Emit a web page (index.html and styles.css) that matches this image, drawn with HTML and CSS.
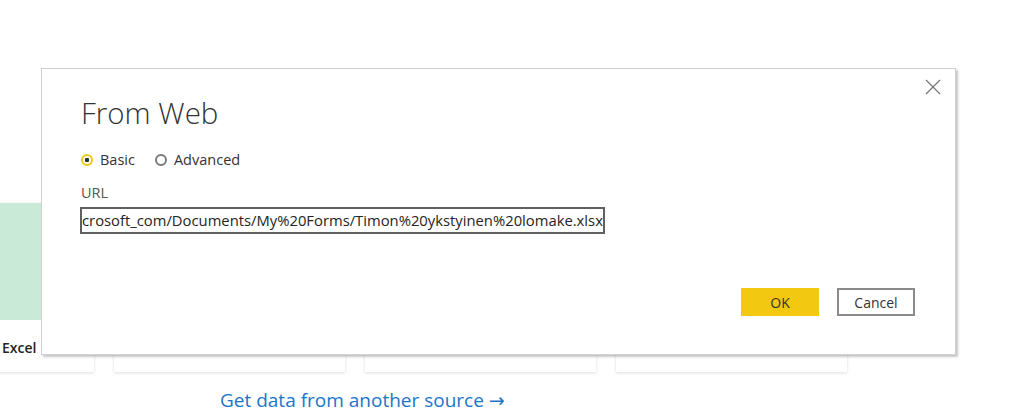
FILE: index.html
```html
<!DOCTYPE html>
<html>
<head>
<meta charset="utf-8">
<link rel="stylesheet" href="styles.css">
</head>
<body>
<div class="page">
  <div class="cards">
    <div class="card">
      <div class="card-img green"></div>
      <div class="card-label">Excel</div>
    </div>
    <div class="card"></div>
    <div class="card"></div>
    <div class="card"></div>
  </div>
  <a class="more" href="#">Get data from another source <span class="arrow">→</span></a>

  <div class="dialog">
    <button class="close" aria-label="Close">
      <svg width="16" height="16" viewBox="0 0 16 16"><path d="M1 1L15 15M15 1L1 15" stroke="#767676" stroke-width="1.2" fill="none"/></svg>
    </button>
    <h1 class="title">From Web</h1>
    <div class="radios">
      <label class="radio"><span class="dot on"></span>Basic</label>
      <label class="radio"><span class="dot off"></span>Advanced</label>
    </div>
    <div class="field-label">URL</div>
    <div class="url">crosoft_com/Documents/My%20Forms/Timon%20ykstyinen%20lomake.xlsx</div>
    <div class="actions">
      <button class="btn ok">OK</button>
      <button class="btn cancel">Cancel</button>
    </div>
  </div>
</div>
</body>
</html>
```
FILE: styles.css
```css
* { box-sizing: border-box; }
html, body { margin: 0; padding: 0; background: #fff; }
body { font-family: "Open Sans", "Noto Sans", sans-serif; color: #333; }
.page { position: relative; width: 1022px; height: 409px; overflow: hidden; }

.cards { display: flex; gap: 20px; margin-left: -137px; padding-top: 203px; }
.card { width: 231px; height: 169px; background: #fff; box-shadow: 0 1px 3px rgba(0,0,0,0.14); flex: none; }
.card-img { height: 117px; }
.green { background: #c9ead7; }
.card-label { margin-top: 18px; padding-left: 139px; font-size: 14px; font-weight: 600; color: #252423; }

.more { display: inline-block; margin: 20px 0 0 220px; font-size: 19px; line-height: 17px; color: #1b75c9; text-decoration: none; }
.arrow { font-family: "DejaVu Sans", sans-serif; font-size: 19px; }

.dialog { position: absolute; left: 41px; top: 68px; width: 915px; height: 287px; background: #fff; border: 1px solid #d0d0d0; box-shadow: 2px 2px 2px rgba(0,0,0,0.22); padding: 24px 40px 0 39px; }
.close { position: absolute; right: 14px; top: 10px; border: 0; background: none; padding: 0; width: 16px; height: 16px; }
.close svg { display: block; }
.title { margin: 0; font-weight: 300; font-size: 29.5px; line-height: 40px; color: #333; }
.radios { display: flex; gap: 20px; margin-top: 17px; font-size: 14.5px; line-height: 20px; }
.radio { display: flex; align-items: center; gap: 7px; color: #333; }
.dot { width: 12px; height: 12px; border-radius: 50%; display: inline-block; }
.dot.on { border: 2px solid #f2c811; background: radial-gradient(circle, #333 0 2px, #fff 2.5px); }
.dot.off { border: 2.5px solid #7a7a7a; }
.field-label { margin-top: 13px; font-size: 14.5px; line-height: 20px; color: #555; }
.url { margin-top: 4px; width: 525px; height: 27px; border: 2px solid #606060; font-size: 14.8px; line-height: 23px; padding-left: 0; white-space: nowrap; overflow: hidden; color: #252423; margin-left: -1px; }
.actions { display: flex; justify-content: flex-end; gap: 18px; margin-top: 54px; }
.btn { width: 78px; height: 28px; font-family: inherit; font-size: 14px; color: #333; padding: 0; }
.ok { background: #f2c811; border: 0; margin-left: 1px; }
.cancel { background: #fff; border: 2px solid #8a8a8a; }
```
